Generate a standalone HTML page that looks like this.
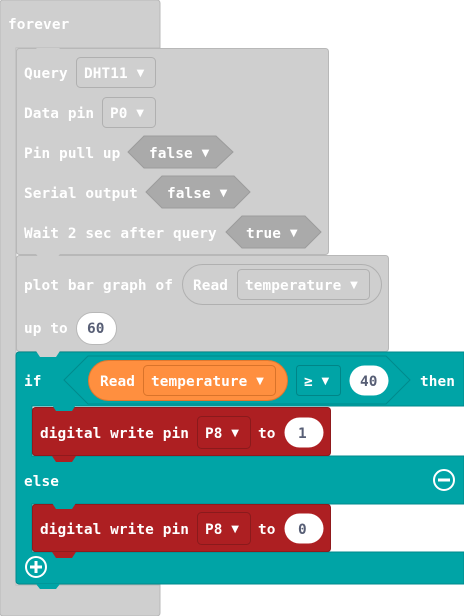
<!DOCTYPE html>
<html><head><style>
html,body{margin:0;padding:0;background:#fff;width:464px;height:616px;overflow:hidden}
text{font-family:"DejaVu Sans Mono","Liberation Mono",monospace;font-weight:bold;font-size:14.4px;letter-spacing:0.1px;fill:#fff}
tspan.a{font-family:"DejaVu Sans",sans-serif;font-size:10px}
</style></head><body>
<svg width="464" height="616" viewBox="0 0 464 616" xmlns="http://www.w3.org/2000/svg">
<path d="M3,0H157a3,3 0 0 1 3,3V48H16V585H160V613a3,3 0 0 1 -3,3H3a3,3 0 0 1 -3,-3V3a3,3 0 0 1 3,-3Z" fill="#cfcfcf" stroke="#b8b8b8"/>
<text x="8" y="29">forever</text>
<rect x="16.5" y="48.5" width="312" height="206" rx="3" fill="#cfcfcf" stroke="#b8b8b8"/>
<path d="M36,48L40,53H56L60,48Z" fill="#cfcfcf"/>
<text x="24" y="78">Query</text>
<rect x="76.5" y="57.5" width="79" height="30" rx="4" fill="#cfcfcf" stroke="#b0b0b0"/>
<text x="84" y="78">DHT11 <tspan class="a" dy="-2">▼</tspan></text>
<text x="24" y="118">Data pin</text>
<rect x="102.5" y="97.5" width="53" height="30" rx="4" fill="#cfcfcf" stroke="#b0b0b0"/>
<text x="110" y="118">P0 <tspan class="a" dy="-2">▼</tspan></text>
<text x="24" y="158">Pin pull up</text>
<path d="M128,152L144,136H216L233,152L216,168H144Z" fill="#aaa" stroke="#9c9c9c"/>
<text x="149" y="158">false <tspan class="a" dy="-2">▼</tspan></text>
<text x="24" y="198">Serial output</text>
<path d="M146,192L162,176H234L250,192L234,208H162Z" fill="#aaa" stroke="#9c9c9c"/>
<text x="167" y="198">false <tspan class="a" dy="-2">▼</tspan></text>
<text x="24" y="238">Wait 2 sec after query</text>
<path d="M226,232L242,216H305L321,232L305,248H242Z" fill="#aaa" stroke="#9c9c9c"/>
<text x="246" y="238">true <tspan class="a" dy="-2">▼</tspan></text>
<rect x="16.5" y="255.5" width="372" height="96" rx="3" fill="#cfcfcf" stroke="#b8b8b8"/>
<path d="M36,254L40,259H56L60,254Z" fill="#cfcfcf"/>
<text x="24" y="290">plot bar graph of</text>
<rect x="182.5" y="264.5" width="199" height="40" rx="20" fill="#cfcfcf" stroke="#b0b0b0"/>
<text x="193" y="290">Read</text>
<rect x="237.5" y="269.5" width="132" height="30" rx="4" fill="#cfcfcf" stroke="#b0b0b0"/>
<text x="245" y="290">temperature <tspan class="a" dy="-2">▼</tspan></text>
<text x="24" y="333">up to</text>
<rect x="76.5" y="312.5" width="40" height="32" rx="16" fill="#fff" stroke="#b8b8b8"/>
<text x="87" y="333" style="fill:#575e75">60</text>
<path d="M19,352H464V406H32V456H464V504H32V552H464V584H19a3,3 0 0 1 -3,-3V355a3,3 0 0 1 3,-3Z" fill="#00a4a6" stroke="#008a8c"/>
<path d="M36,351L40,357H56L60,351Z" fill="#cfcfcf"/>
<path d="M36,584L40,589H56L60,584Z" fill="#00a4a6"/>
<text x="24" y="386">if</text>
<path d="M64,380L88,356H386L410,380L386,404H88Z" fill="#00a4a6" stroke="#008a8c"/>
<rect x="88.5" y="360.5" width="199" height="40" rx="20" fill="#ff8f3f" stroke="#e0782e"/>
<text x="100" y="386">Read</text>
<rect x="143.5" y="365.5" width="132" height="30" rx="4" fill="#ff8f3f" stroke="#d9732a"/>
<text x="151" y="386">temperature <tspan class="a" dy="-2">▼</tspan></text>
<rect x="296.5" y="365.5" width="44" height="30" rx="3" fill="#00a4a6" stroke="#008587"/>
<text x="304" y="386">≥ <tspan class="a" dy="-2">▼</tspan></text>
<rect x="349.5" y="365.5" width="39" height="30" rx="15" fill="#fff"/>
<text x="360" y="386" style="fill:#575e75">40</text>
<text x="420" y="386">then</text>
<rect x="32.5" y="407.5" width="298" height="48" rx="3" fill="#ad1f22" stroke="#901a1d"/>
<path d="M52,405L56,411H72L76,405Z" fill="#00a4a6"/>
<path d="M52,456L56,462H72L76,456Z" fill="#ad1f22"/>
<text x="40" y="438">digital write pin</text>
<rect x="197.5" y="416.5" width="53" height="32" rx="4" fill="#ad1f22" stroke="#8a1a1c"/>
<text x="205" y="438">P8 <tspan class="a" dy="-2">▼</tspan></text>
<text x="258" y="438">to</text>
<rect x="284.5" y="417.5" width="39" height="30" rx="15" fill="#fff"/>
<text x="298" y="438" style="fill:#575e75">1</text>
<text x="24" y="486">else</text>
<circle cx="444" cy="480" r="10" fill="none" stroke="#fff" stroke-width="2"/>
<rect x="438" y="478.5" width="12" height="3" fill="#fff"/>
<rect x="32.5" y="504.5" width="298" height="47" rx="3" fill="#ad1f22" stroke="#901a1d"/>
<path d="M52,503L56,509H72L76,503Z" fill="#00a4a6"/>
<path d="M52,552L56,558H72L76,552Z" fill="#ad1f22"/>
<text x="40" y="534">digital write pin</text>
<rect x="197.5" y="512.5" width="53" height="32" rx="4" fill="#ad1f22" stroke="#8a1a1c"/>
<text x="205" y="534">P8 <tspan class="a" dy="-2">▼</tspan></text>
<text x="258" y="534">to</text>
<rect x="284.5" y="513.5" width="39" height="30" rx="15" fill="#fff"/>
<text x="298" y="534" style="fill:#575e75">0</text>
<circle cx="36" cy="567" r="10" fill="none" stroke="#fff" stroke-width="2"/>
<rect x="30" y="565.5" width="12" height="3" fill="#fff"/>
<rect x="34.5" y="561" width="3" height="12" fill="#fff"/>
</svg>
</body></html>
